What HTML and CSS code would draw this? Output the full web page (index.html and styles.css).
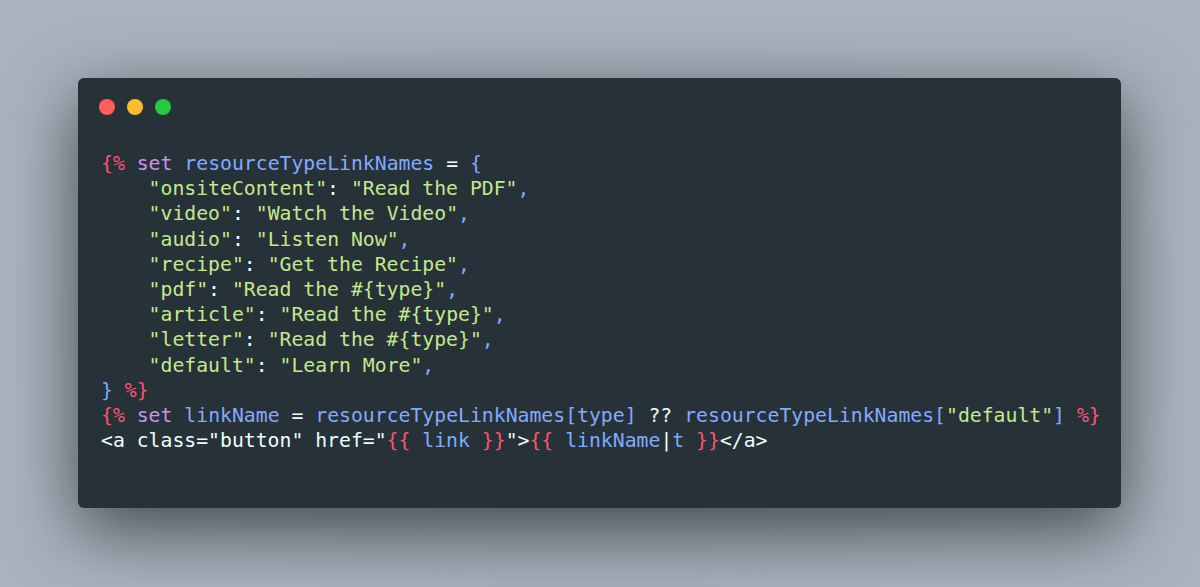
FILE: index.html
```html
<!DOCTYPE html>
<html>
<head>
<meta charset="utf-8">
<link rel="stylesheet" href="styles.css">
</head>
<body>
<div class="stage">
  <div class="window">
    <div class="bar">
      <span class="dot red"></span>
      <span class="dot yellow"></span>
      <span class="dot green"></span>
    </div>
<pre class="code"><span class="d">{%</span> <span class="k">set</span> <span class="v">resourceTypeLinkNames</span> <span class="o">=</span> <span class="v">{</span>
    <span class="s">"onsiteContent"</span><span class="o">:</span> <span class="s">"Read the PDF"</span><span class="v">,</span>
    <span class="s">"video"</span><span class="o">:</span> <span class="s">"Watch the Video"</span><span class="v">,</span>
    <span class="s">"audio"</span><span class="o">:</span> <span class="s">"Listen Now"</span><span class="v">,</span>
    <span class="s">"recipe"</span><span class="o">:</span> <span class="s">"Get the Recipe"</span><span class="v">,</span>
    <span class="s">"pdf"</span><span class="o">:</span> <span class="s">"Read the #{type}"</span><span class="v">,</span>
    <span class="s">"article"</span><span class="o">:</span> <span class="s">"Read the #{type}"</span><span class="v">,</span>
    <span class="s">"letter"</span><span class="o">:</span> <span class="s">"Read the #{type}"</span><span class="v">,</span>
    <span class="s">"default"</span><span class="o">:</span> <span class="s">"Learn More"</span><span class="v">,</span>
<span class="v">}</span> <span class="d">%}</span>
<span class="d">{%</span> <span class="k">set</span> <span class="v">linkName</span> <span class="o">=</span> <span class="v">resourceTypeLinkNames[type]</span> <span class="o">??</span> <span class="v">resourceTypeLinkNames[</span><span class="s">"default"</span><span class="v">]</span> <span class="d">%}</span>
<span class="o">&lt;a class="button" href="</span><span class="d">{{</span><span class="v"> link </span><span class="d">}}</span><span class="o">"&gt;</span><span class="d">{{</span><span class="v"> linkName</span><span class="o">|</span><span class="v">t </span><span class="d">}}</span><span class="o">&lt;/a&gt;</span></pre>
  </div>
</div>
</body>
</html>
```

FILE: styles.css
```css
html, body {
  margin: 0;
  padding: 0;
}
body {
  width: 1200px;
  height: 587px;
  overflow: hidden;
  background: radial-gradient(ellipse at 50% 55%, #9aa5b0 0%, #a8b3be 70%);
}
.stage {
  padding: 78px 79px 0 78px;
}
.window {
  width: 1043px;
  height: 430px;
  box-sizing: border-box;
  background: #263238;
  border-radius: 6px;
  box-shadow: 0 22px 70px rgba(0, 0, 0, 0.6);
  padding: 21px 21px 0 21px;
}
.bar {
  display: flex;
  gap: 12px;
  height: 16px;
}
.dot {
  width: 16px;
  height: 16px;
  border-radius: 50%;
  display: block;
}
.red { background: #ff5f56; }
.yellow { background: #ffbd2e; }
.green { background: #27c93f; }
.code {
  margin: 36px 0 0 2px;
  font-family: "DejaVu Sans Mono", monospace;
  font-size: 19.78px;
  line-height: 25.2px;
  color: #eeffff;
  white-space: pre;
}
.d { color: #ff5370; }
.k { color: #c792ea; }
.v { color: #82aaff; }
.s { color: #c3e88d; }
.o { color: #eeffff; }
```
